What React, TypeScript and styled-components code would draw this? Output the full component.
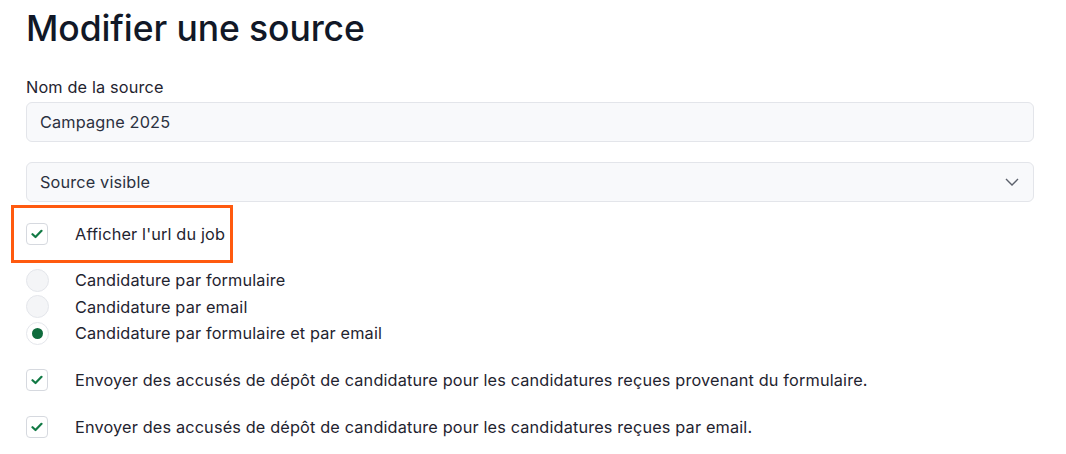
import React from 'react';
import styled, { createGlobalStyle } from 'styled-components';

const GlobalStyle = createGlobalStyle`
    body {
        margin: 0;
        background: #FFFFFF;
        font-family: Inter, "Noto Sans", sans-serif;
        color: #1F2430;
    }
`;

const Page = styled.div`
    width: 1066px;
    height: 454px;
    box-sizing: border-box;
    padding: 0 32px 0 26px;
    overflow: hidden;
    font-size: 16.3px;
    letter-spacing: 0.15px;
`;
const Title = styled.h1`
    margin: 0;
    padding-top: 6px;
    font-size: 35.5px;
    line-height: 46px;
    font-weight: 500;
    color: #111827;
    letter-spacing: -0.1px;
`;
const Label = styled.label`
    display: block;
    margin-top: 25px;
    line-height: 20px;
    color: #1F2430;
`;
const Field = styled.div<{ $gap: number }>`
    margin-top: ${props => props.$gap}px;
    height: 40px;
    box-sizing: border-box;
    background: #F8F9FB;
    border: 1px solid #E3E5EA;
    border-radius: 6px;
    padding: 0 14px 0 13px;
    display: flex;
    align-items: center;
    justify-content: space-between;
    color: #2B3140;
`;
const Highlight = styled.div`
    margin: 3px 0 0 -15px;
    width: 222px;
    height: 58px;
    box-sizing: border-box;
    border: 3px solid #FF5A0F;
    padding-left: 12px;
    display: flex;
    align-items: center;
`;
const Row = styled.div<{ $gap?: number }>`
    display: flex;
    align-items: center;
    gap: 27px;
    margin-top: ${props => props.$gap || 0}px;
    line-height: 22px;
    color: #1F2430;
`;
const RadioRow = styled(Row)`
    gap: 26px;
    height: 26.5px;
`;
const Box = styled.span`
    width: 22px;
    height: 22px;
    box-sizing: border-box;
    border: 1px solid #D6D9DF;
    border-radius: 4px;
    background: #FFFFFF;
    display: flex;
    align-items: center;
    justify-content: center;
    flex: none;
`;
const Radio = styled.span<{ $on?: boolean }>`
    width: 23px;
    height: 23px;
    box-sizing: border-box;
    border: 1px solid #E4E6EB;
    border-radius: 50%;
    background: ${props => props.$on ? '#FFFFFF' : '#F4F5F7'};
    display: flex;
    align-items: center;
    justify-content: center;
    flex: none;
`;
const Dot = styled.span`
    width: 11px;
    height: 11px;
    border-radius: 50%;
    background: #0E6B3C;
`;
const RadioList = styled.div`
    margin-top: 4px;
    display: flex;
    flex-direction: column;
`;

const Check = () => (
    <Box>
        <svg width="12" height="10" viewBox="0 0 12 10">
            <path d="M1.5 5.2 L4.5 8 L10.5 1.8" fill="none" stroke="#127A45" strokeWidth="2.2" strokeLinecap="round" strokeLinejoin="round" />
        </svg>
    </Box>
);

const Chevron = () => (
    <svg width="14" height="8" viewBox="0 0 14 8">
        <path d="M1 1 L7 7 L13 1" fill="none" stroke="#5B606B" strokeWidth="1.4" />
    </svg>
);

const radios = [
    { text: 'Candidature par formulaire', on: false },
    { text: 'Candidature par email', on: false },
    { text: 'Candidature par formulaire et par email', on: true },
];

const App = () => {
    return (
        <Page>
            <GlobalStyle />
            <Title>Modifier une source</Title>
            <Label>Nom de la source</Label>
            <Field $gap={5}>Campagne 2025</Field>
            <Field $gap={20}>
                <span>Source visible</span>
                <Chevron />
            </Field>
            <Highlight>
                <Row>
                    <Check />
                    <span>Afficher l'url du job</span>
                </Row>
            </Highlight>
            <RadioList>
                {radios.map((r) => (
                    <RadioRow key={r.text}>
                        <Radio $on={r.on}>{r.on && <Dot />}</Radio>
                        <span>{r.text}</span>
                    </RadioRow>
                ))}
            </RadioList>
            <Row $gap={22}>
                <Check />
                <span>Envoyer des accusés de dépôt de candidature pour les candidatures reçues provenant du formulaire.</span>
            </Row>
            <Row $gap={25}>
                <Check />
                <span>Envoyer des accusés de dépôt de candidature pour les candidatures reçues par email.</span>
            </Row>
        </Page>
    );
};
export default App;
